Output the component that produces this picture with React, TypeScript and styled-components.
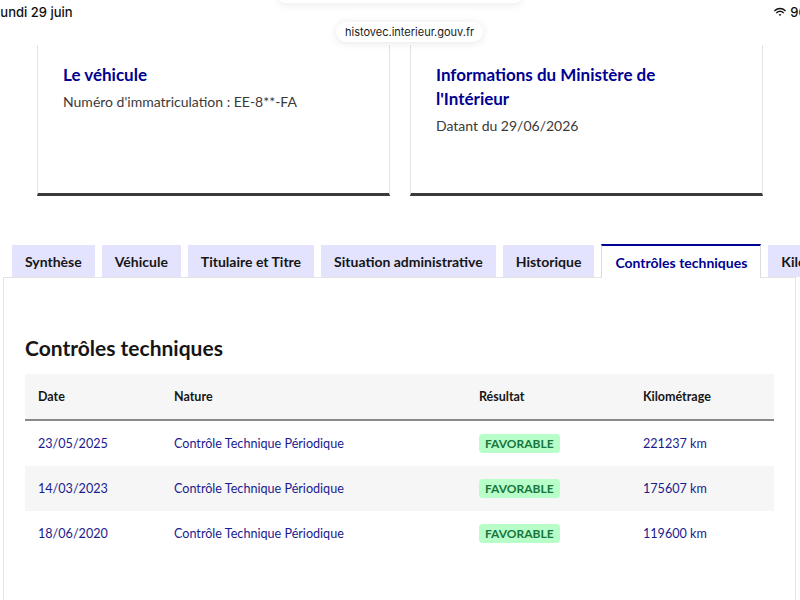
import React from 'react';
import styled, { createGlobalStyle } from 'styled-components';

const Global = createGlobalStyle`
  html, body { margin: 0; padding: 0; background: #fff; }
  body { font-family: Lato, "Noto Sans", sans-serif; color: #161616; }
  * { box-sizing: border-box; }
`;

const Page = styled.div`
  position: relative;
  width: 800px;
  height: 600px;
  overflow: hidden;
  background: #fff;
`;

const StatusBar = styled.div`
  height: 45px;
  display: flex;
  justify-content: space-between;
  align-items: flex-start;
  padding-top: 4px;
  font-family: Inter, "Noto Sans", sans-serif;
  font-size: 13px;
  font-weight: 500;
  color: #111;
`;

const Clock = styled.span`
  margin-left: -7px;
`;

const Battery = styled.span`
  display: flex;
  align-items: center;
  gap: 4px;
  margin-right: -23px;
`;

const TopPill = styled.div`
  position: absolute;
  left: 278px;
  top: -10px;
  width: 244px;
  height: 13px;
  border-radius: 8px;
  background: #fff;
  box-shadow: 0 2px 8px rgba(0, 0, 0, 0.08);
`;

const UrlPill = styled.div`
  position: absolute;
  left: 336px;
  top: 22px;
  height: 20px;
  padding: 0 9px;
  display: flex;
  align-items: center;
  border-radius: 10px;
  background: #fff;
  box-shadow: 0 1px 8px rgba(0, 0, 0, 0.1);
  font-family: Inter, "Noto Sans", sans-serif;
  font-size: 11px;
  color: #1a1a1a;
  z-index: 2;
`;

const CardRow = styled.div`
  display: flex;
  gap: 20px;
  padding: 0 37px;
`;

const Card = styled.div`
  flex: 1;
  height: 151px;
  border: 1px solid #e3e3e3;
  border-top: none;
  border-bottom: 3px solid #3a3a3a;
  padding: 18px 25px;
`;

const CardTitle = styled.h3`
  margin: 0;
  font-size: 17px;
  line-height: 24px;
  font-weight: 700;
  color: #000091;
`;

const CardText = styled.p`
  margin: 3px 0 0;
  font-size: 14px;
  line-height: 24px;
  color: #3a3a3a;
`;

const Tabs = styled.div`
  margin-top: 48px;
  display: flex;
  align-items: flex-end;
  gap: 7px;
  padding-left: 12px;
  white-space: nowrap;
  position: relative;
  z-index: 1;
`;

const Tab = styled.div<{ $active?: boolean }>`
  flex: none;
  height: ${(p) => (p.$active ? '34px' : '32px')};
  margin-bottom: ${(p) => (p.$active ? '-1px' : '0')};
  padding: 0 13px;
  display: flex;
  align-items: center;
  font-size: 14px;
  font-weight: 700;
  color: ${(p) => (p.$active ? '#000091' : '#161616')};
  background: ${(p) => (p.$active ? '#fff' : '#e3e3fd')};
  border-top: ${(p) => (p.$active ? '2px solid #000091' : 'none')};
  border-left: ${(p) => (p.$active ? '1px solid #ddd' : 'none')};
  border-right: ${(p) => (p.$active ? '1px solid #ddd' : 'none')};
`;

const Panel = styled.div`
  margin: 0 4px 0 3px;
  border: 1px solid #e3e3e3;
  border-bottom: none;
  height: 330px;
  padding: 56px 21px 0 21px;
`;

const Heading = styled.h2`
  margin: 0 0 12px;
  font-size: 21px;
  line-height: 28px;
  font-weight: 700;
  color: #161616;
`;

const Table = styled.div`
  display: grid;
  grid-template-columns: 136px 305px 164px 1fr;
`;

const HeadCell = styled.div`
  height: 47px;
  display: flex;
  align-items: center;
  padding-left: 13px;
  background: #f6f6f6;
  border-bottom: 2px solid #8a8a8a;
  font-size: 12.5px;
  font-weight: 700;
  color: #161616;
`;

const Cell = styled.div<{ $alt?: boolean }>`
  height: 45px;
  display: flex;
  align-items: center;
  padding-left: 13px;
  background: ${(p) => (p.$alt ? '#f6f6f6' : '#fff')};
  font-size: 12.6px;
  color: #1b1b8f;
`;

const Badge = styled.span`
  display: inline-flex;
  align-items: center;
  height: 19px;
  padding: 0 6px;
  border-radius: 4px;
  background: #b8fec9;
  color: #18753c;
  font-size: 12px;
  font-weight: 700;
  letter-spacing: 0;
`;

const rows = [
  { date: '23/05/2025', km: '221237 km' },
  { date: '14/03/2023', km: '175607 km' },
  { date: '18/06/2020', km: '119600 km' },
];

const tabs = [
  'Synthèse',
  'Véhicule',
  'Titulaire et Titre',
  'Situation administrative',
  'Historique',
  'Contrôles techniques',
  'Kilométrage',
];

const Wifi = () => (
  <svg width="12" height="10" viewBox="0 0 12 10">
    <path d="M1 3.6 A7 7 0 0 1 11 3.6" fill="none" stroke="#111" strokeWidth="1.5" strokeLinecap="round" />
    <path d="M2.9 5.6 A4.3 4.3 0 0 1 9.1 5.6" fill="none" stroke="#111" strokeWidth="1.5" strokeLinecap="round" />
    <path d="M4.6 7.6 L6 9 L7.4 7.6 A2 2 0 0 0 4.6 7.6 Z" fill="#111" />
  </svg>
);

export default function App() {
  return (
    <Page>
      <Global />
      <TopPill />
      <UrlPill>histovec.interieur.gouv.fr</UrlPill>
      <StatusBar>
        <Clock>Lundi 29 juin</Clock>
        <Battery>
          <Wifi />
          96 %
        </Battery>
      </StatusBar>
      <CardRow>
        <Card>
          <CardTitle>Le véhicule</CardTitle>
          <CardText>Numéro d'immatriculation : EE-8**-FA</CardText>
        </Card>
        <Card>
          <CardTitle>
            Informations du Ministère de
            <br />
            l'Intérieur
          </CardTitle>
          <CardText>Datant du 29/06/2026</CardText>
        </Card>
      </CardRow>
      <Tabs>
        {tabs.map((t) => (
          <Tab key={t} $active={t === 'Contrôles techniques'}>
            {t}
          </Tab>
        ))}
      </Tabs>
      <Panel>
        <Heading>Contrôles techniques</Heading>
        <Table>
          <HeadCell>Date</HeadCell>
          <HeadCell>Nature</HeadCell>
          <HeadCell>Résultat</HeadCell>
          <HeadCell>Kilométrage</HeadCell>
          {rows.map((r, i) => (
            <React.Fragment key={r.date}>
              <Cell $alt={i === 1}>{r.date}</Cell>
              <Cell $alt={i === 1}>Contrôle Technique Périodique</Cell>
              <Cell $alt={i === 1}>
                <Badge>FAVORABLE</Badge>
              </Cell>
              <Cell $alt={i === 1}>{r.km}</Cell>
            </React.Fragment>
          ))}
        </Table>
      </Panel>
    </Page>
  );
}
